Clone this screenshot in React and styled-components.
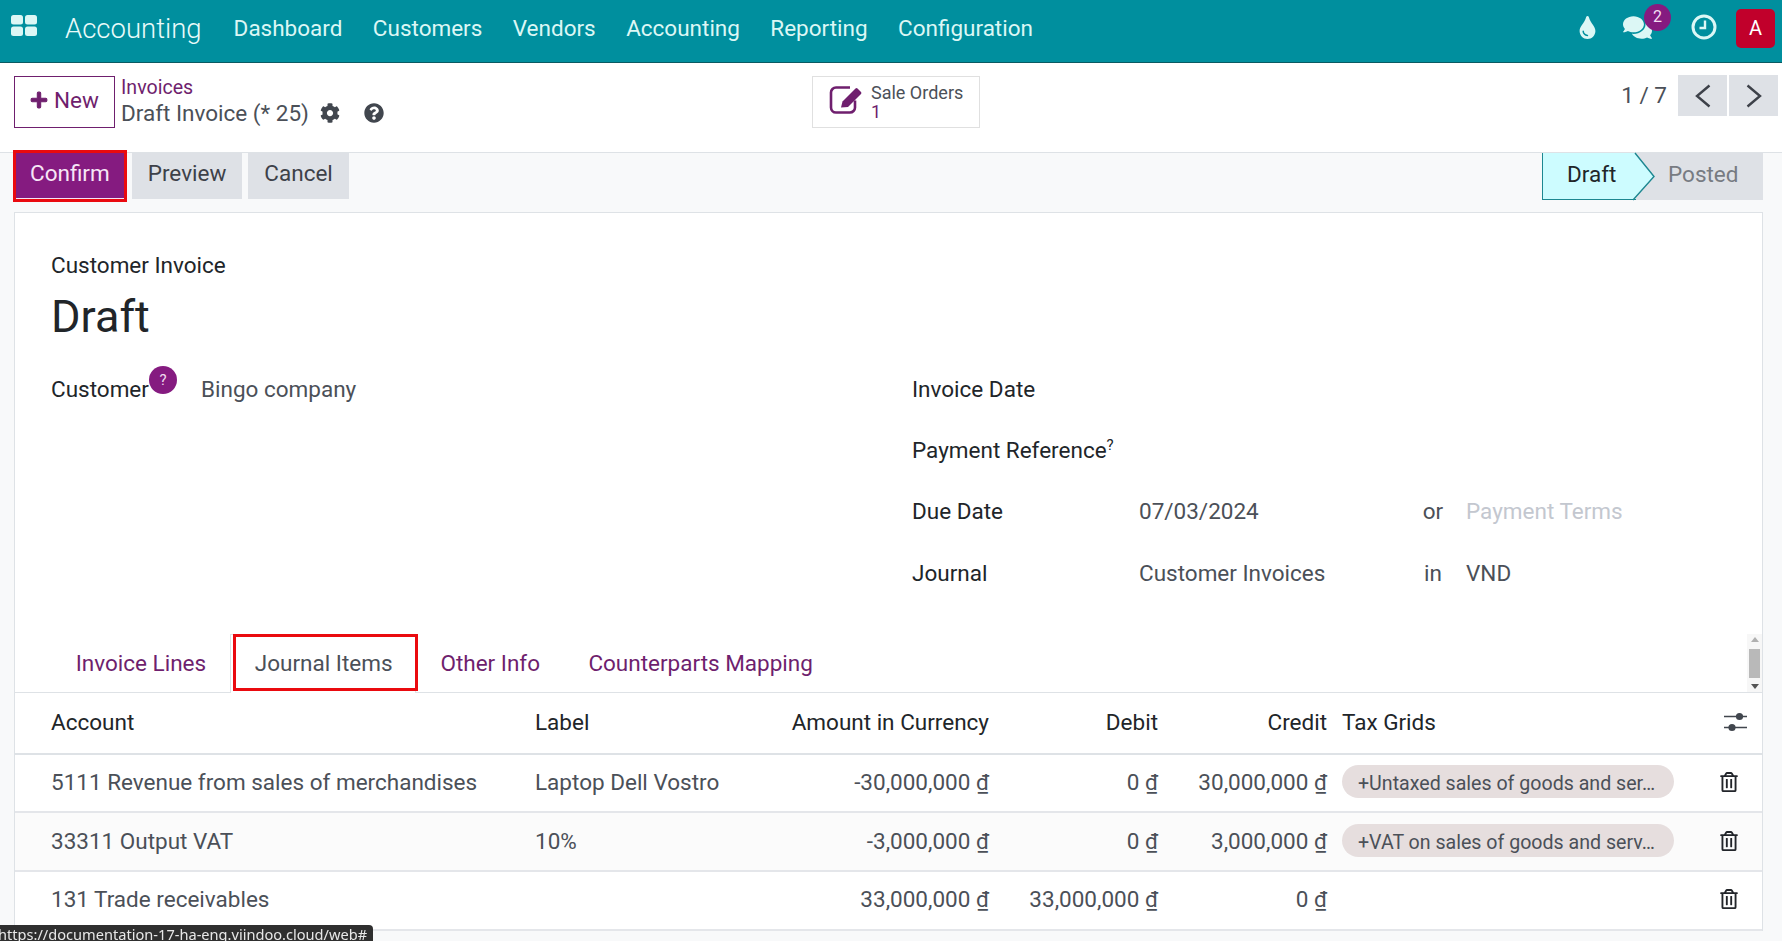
import React from 'react';
import styled, { createGlobalStyle } from 'styled-components';
import { FaPlus, FaCog, FaQuestionCircle, FaTint, FaComments, FaRegTrashAlt } from 'react-icons/fa';

const GlobalStyle = createGlobalStyle`
	html, body {
		margin: 0;
		height: 100%;
		overflow: hidden;
		background: #f8f9fa;
		font-family: Roboto, "Liberation Sans", sans-serif;
		font-size: 22.5px;
		color: #212529;
	}
	* {
		box-sizing: border-box;
	}
`;

const purple = '#851b80';
const link = '#6f1f6e';
const grey = '#4b5058';
const red = '#ea0a0f';

const Navbar = styled.header`
	display: flex;
	align-items: center;
	height: 63px;
	padding: 0 7px 6px 11px;
	background: #008f9e;
	border-bottom: 1px solid #0a5a62;
	color: #dcf7f5;
`;

const AppsIcon = styled.svg`
	width: 26px;
	height: 21px;
	margin-bottom: 5px;
	fill: #dcf7f5;
`;

const Brand = styled.div`
	margin-left: 28px;
	font-size: 27.5px;
	font-weight: 300;
	color: #eafbfa;
`;

const Menu = styled.nav`
	display: flex;
	gap: 30.4px;
	margin-left: 32px;
`;

const Systray = styled.div`
	display: flex;
	align-items: center;
	margin-left: auto;
	padding-top: 1px;
`;

const TrayItem = styled.div`
	position: relative;
	display: flex;
	margin-right: ${(p) => p.$gap}px;
	margin-bottom: 3px;
	font-size: ${(p) => p.$size}px;
`;

const Badge = styled.span`
	position: absolute;
	top: -9px;
	right: -19px;
	width: 27px;
	height: 27px;
	border-radius: 50%;
	background: ${purple};
	color: #f3dff2;
	font-size: 16px;
	line-height: 25px;
	text-align: center;
`;

const Avatar = styled.div`
	width: 39px;
	height: 39px;
	border-radius: 5px;
	background: #c1002b;
	color: #fff;
	font-size: 20px;
	line-height: 39px;
	text-align: center;
`;

const ControlPanel = styled.section`
	display: flex;
	align-items: flex-start;
	height: 90px;
	padding: 13px 4px 0 14px;
	background: #fff;
	border-bottom: 1px solid #dee2e6;
`;

const NewButton = styled.button`
	display: flex;
	align-items: center;
	gap: 6px;
	width: 101px;
	height: 52px;
	padding: 0 0 4px 15px;
	background: #fff;
	border: 1px solid ${link};
	color: ${link};
	font: inherit;
`;

const Breadcrumb = styled.div`
	display: flex;
	flex-direction: column;
	width: 691px;
	margin-left: 6px;
	margin-top: 0;
`;

const Crumb = styled.a`
	height: 21px;
	color: ${link};
	font-size: 19.6px;
	line-height: 24px;
`;

const CurrentRow = styled.div`
	display: flex;
	align-items: center;
	height: 32px;
	color: ${grey};
`;

const RowIcon = styled.span`
	display: flex;
	margin-left: ${(p) => p.$left}px;
	color: #41464e;
	font-size: 20px;
`;

const SmartButton = styled.button`
	display: flex;
	align-items: center;
	gap: 8px;
	width: 168px;
	height: 52px;
	padding: 0 0 0 16px;
	background: #fff;
	border: 1px solid #e0e0e0;
	font: inherit;
	text-align: left;
`;

const SmartIcon = styled.svg`
	width: 34px;
	height: 28px;
	margin-bottom: 5px;
	color: ${link};
`;

const SmartText = styled.div`
	display: flex;
	flex-direction: column;
	font-size: 18px;
	line-height: 19px;
	color: ${grey};

	b {
		font-weight: 400;
		color: ${link};
	}
`;

const Pager = styled.div`
	display: flex;
	align-items: center;
	gap: 2px;
	margin-left: auto;
	margin-top: -1px;
`;

const PagerText = styled.span`
	margin-right: 9px;
	padding-bottom: 2px;
	color: ${grey};
`;

const PagerButton = styled.button`
	display: flex;
	align-items: center;
	justify-content: center;
	width: 49px;
	height: 41px;
	padding: 0;
	border: 0;
	background: #dee1e6;
`;

const Chevron = styled.svg`
	width: 16px;
	height: 24px;
	fill: none;
	stroke: #3d4149;
	stroke-width: 2.4;
`;

const ActionBar = styled.section`
	display: flex;
	align-items: flex-start;
	height: 59px;
	padding-left: 14px;
`;

const ActionButton = styled.button`
	height: 46px;
	margin-right: 6px;
	padding: 0 16px 6px;
	border: 0;
	background: #dee1e6;
	color: #3d4149;
	font: inherit;
`;

const ConfirmButton = styled(ActionButton)`
	margin: 0 8px 0 2px;
	padding: 0 14px 5px;
	background: ${purple};
	color: #f7e6f6;
	border-bottom: 1px solid #f4e5f3;
	outline: 3px solid ${red};
`;

const Statusbar = styled.div`
	display: flex;
	height: 47px;
	margin-left: auto;
	margin-right: 19px;
	background: #dee1e6;
`;

const StatusStep = styled.div`
	position: relative;
	display: flex;
	align-items: center;
	width: ${(p) => p.$width}px;
	padding-left: ${(p) => p.$pad}px;
	padding-bottom: ${(p) => (p.$active ? 4 : 5)}px;
	color: ${(p) => (p.$active ? '#212529' : '#777b82')};
	${(p) => p.$active && 'background: #cdfcff; border: 1px solid #1d8791; border-top: 0; border-right: 0;'}
`;

const StatusArrow = styled.svg`
	position: absolute;
	top: 0;
	right: -19px;
	width: 20px;
	height: 47px;
	overflow: visible;
	fill: #cdfcff;
	stroke: #1d8791;
	stroke-width: 1.4;
`;

const Sheet = styled.main`
	margin: 0 19px 0 14px;
	padding-top: 37px;
	background: #fff;
	border: 1px solid #dee2e6;
	border-bottom: 0;
`;

const SheetHead = styled.div`
	padding-left: 36px;
`;

const DocType = styled.div`
	line-height: 30px;
`;

const Title = styled.h1`
	margin: 0 0 4.5px;
	font-size: 45px;
	font-weight: 400;
	line-height: 73.5px;
`;

const FormGrid = styled.div`
	display: grid;
	grid-template-columns: 861px 227px 283px 44px 1fr;
	grid-auto-rows: 61.4px;
	align-items: center;
	height: 276px;
	padding-left: 36px;
`;

const LeftField = styled.div`
	grid-row: 1;
	display: flex;
	align-items: center;
`;

const FieldLabel = styled.span`
	grid-column: 2;
	white-space: nowrap;
`;

const FieldValue = styled.span`
	color: ${(p) => (p.$muted ? '#c3c7cf' : grey)};
	white-space: nowrap;
`;

const CustomerLabel = styled.span`
	position: relative;
	width: 150px;
`;

const HelpBadge = styled.span`
	position: absolute;
	top: -10px;
	left: 98px;
	width: 28px;
	height: 28px;
	border-radius: 50%;
	background: ${purple};
	color: #f0dcef;
	font-size: 15px;
	line-height: 28px;
	text-align: center;
`;

const Sup = styled.sup`
	font-size: 15px;
	line-height: 0;
`;

const Connector = styled.span`
	grid-column: 4;
	width: 22px;
	color: ${grey};
	text-align: center;
`;

const Tabs = styled.nav`
	display: flex;
	height: 59px;
	padding: 0 0 0 36.5px;
	border-bottom: 1px solid #dee2e6;
`;

const Tab = styled.a`
	display: flex;
	align-items: center;
	height: 58px;
	padding: 0 24.2px;
	color: ${link};
`;

const ActiveTab = styled(Tab)`
	position: relative;
	height: 59px;
	padding: 0 22.7px 2px 23.5px;
	background: #fff;
	border: 1px solid #dee2e6;
	border-bottom: 0;
	color: ${grey};

	&::after {
		content: '';
		position: absolute;
		top: -1px;
		left: 2px;
		right: -3px;
		bottom: 2px;
		border: 3px solid ${red};
	}
`;

const Scrollbar = styled.div`
	display: flex;
	flex-direction: column;
	align-items: center;
	justify-content: space-between;
	width: 15px;
	height: 58px;
	margin-left: auto;
	padding: 3px 0;
	background: #f7f7f7;
`;

const ScrollThumb = styled.div`
	width: 11px;
	height: 29px;
	background: #b9b9b9;
`;

const ScrollArrow = styled.div`
	width: 0;
	height: 0;
	border-left: 4px solid transparent;
	border-right: 4px solid transparent;
	${(p) => (p.$up ? 'border-bottom: 5px solid #b0b0b0;' : 'border-top: 5px solid #555;')}
`;

const Table = styled.table`
	width: 100%;
	table-layout: fixed;
	border-collapse: collapse;
`;

const HeadCell = styled.th`
	height: 60.5px;
	padding: 0 7px 1px;
	padding-left: ${(p) => (p.$first ? 36 : p.$tax ? 8 : p.$right ? 0 : 7)}px;
	border-bottom: 2px solid #dee2e6;
	font-weight: 400;
	text-align: ${(p) => (p.$right ? 'right' : 'left')};
	white-space: nowrap;
`;

const Row = styled.tr`
	background: ${(p) => (p.$odd ? '#fbfbfb' : '#fff')};
`;

const Cell = styled.td`
	height: 58.7px;
	padding: 0 7px 2px;
	padding-left: ${(p) => (p.$first ? 36 : p.$tax ? 8 : 7)}px;
	border-bottom: 2px solid #e4e6ea;
	color: ${grey};
	text-align: ${(p) => (p.$right ? 'right' : 'left')};
	white-space: nowrap;
`;

const Currency = styled.span`
	text-decoration: underline;
`;

const Pill = styled.span`
	display: block;
	width: 332px;
	height: 33px;
	padding-left: 16px;
	border-radius: 17px;
	background: #e6dede;
	font-size: 19.6px;
	line-height: 37px;
	white-space: nowrap;
`;

const IconCell = styled.span`
	display: flex;
	justify-content: flex-end;
	padding-right: ${(p) => p.$pad}px;
	color: #22252a;
	font-size: 20px;
`;

const SliderIcon = styled.svg`
	width: 23px;
	height: 20px;
	fill: #41464e;
	stroke: #41464e;
`;

const LinkStatus = styled.div`
	position: fixed;
	left: -8px;
	bottom: 0;
	height: 16px;
	padding: 0 6px;
	border-radius: 0 4px 0 0;
	background: #2f2f2f;
	color: #e8e8e8;
	font-family: "Noto Sans", sans-serif;
	font-size: 14.6px;
	line-height: 18px;
	white-space: nowrap;
`;

const lines = [
	{ account: '5111 Revenue from sales of merchandises', label: 'Laptop Dell Vostro', amount: '-30,000,000', debit: '0', credit: '30,000,000', tax: '+Untaxed sales of goods and ser…' },
	{ account: '33311 Output VAT', label: '10%', amount: '-3,000,000', debit: '0', credit: '3,000,000', tax: '+VAT on sales of goods and serv…' },
	{ account: '131 Trade receivables', label: '', amount: '33,000,000', debit: '33,000,000', credit: '0', tax: '' },
];

const Money = ({ value }) => (
	<>
		{value} <Currency>₫</Currency>
	</>
);

export default function App() {
	return (
		<>
			<GlobalStyle />
			<Navbar>
				<AppsIcon viewBox="0 0 26 21">
					<rect x="0" y="0" width="12" height="9.5" rx="2.5" />
					<rect x="14" y="0" width="12" height="9.5" rx="2.5" />
					<rect x="0" y="11.5" width="12" height="9.5" rx="2.5" />
					<rect x="14" y="11.5" width="12" height="9.5" rx="2.5" />
				</AppsIcon>
				<Brand>Accounting</Brand>
				<Menu>
					<span>Dashboard</span>
					<span>Customers</span>
					<span>Vendors</span>
					<span>Accounting</span>
					<span>Reporting</span>
					<span>Configuration</span>
				</Menu>
				<Systray>
					<TrayItem $gap={24} $size={23}>
						<FaTint />
					</TrayItem>
					<TrayItem $gap={39} $size={29}>
						<FaComments />
						<Badge>2</Badge>
					</TrayItem>
					<TrayItem $gap={19} $size={26}>
						<svg width="26" height="26" viewBox="0 0 26 26" fill="none" stroke="currentColor">
							<circle cx="13" cy="13" r="11" strokeWidth="3" />
							<path d="M14 6.5v7.5H8.5" strokeWidth="2.4" />
						</svg>
					</TrayItem>
					<Avatar>A</Avatar>
				</Systray>
			</Navbar>
			<ControlPanel>
				<NewButton>
					<FaPlus size={18} stroke="currentColor" strokeWidth={30} />
					New
				</NewButton>
				<Breadcrumb>
					<Crumb>Invoices</Crumb>
					<CurrentRow>
						Draft Invoice (* 25)
						<RowIcon $left={11}>
							<FaCog />
						</RowIcon>
						<RowIcon $left={24}>
							<FaQuestionCircle />
						</RowIcon>
					</CurrentRow>
				</Breadcrumb>
				<SmartButton>
					<SmartIcon viewBox="0 0 34 28">
						<path
							d="M21 1.5H7a5 5 0 0 0-5 5v15a5 5 0 0 0 5 5h14a5 5 0 0 0 5-5v-7"
							fill="none"
							stroke="currentColor"
							strokeWidth="2.6"
						/>
						<path
							d="M12 21.5l1.5-6 13-13a1.5 1.5 0 0 1 2 0l3.5 3.5a1.5 1.5 0 0 1 0 2l-13 13z"
							fill="currentColor"
						/>
					</SmartIcon>
					<SmartText>
						Sale Orders
						<b>1</b>
					</SmartText>
				</SmartButton>
				<Pager>
					<PagerText>1 / 7</PagerText>
					<PagerButton>
						<Chevron viewBox="0 0 16 24">
							<path d="M14.5 1.5L2 12l12.5 10.5" />
						</Chevron>
					</PagerButton>
					<PagerButton>
						<Chevron viewBox="0 0 16 24">
							<path d="M1.5 1.5L14 12 1.5 22.5" />
						</Chevron>
					</PagerButton>
				</Pager>
			</ControlPanel>
			<ActionBar>
				<ConfirmButton>Confirm</ConfirmButton>
				<ActionButton>Preview</ActionButton>
				<ActionButton>Cancel</ActionButton>
				<Statusbar>
					<StatusStep $active $width={94} $pad={24}>
						Draft
						<StatusArrow viewBox="0 0 20 47">
							<path d="M0 0l19 23.5L-2 47" />
						</StatusArrow>
					</StatusStep>
					<StatusStep $width={127} $pad={32}>
						Posted
					</StatusStep>
				</Statusbar>
			</ActionBar>
			<Sheet>
				<SheetHead>
					<DocType>Customer Invoice</DocType>
					<Title>Draft</Title>
				</SheetHead>
				<FormGrid>
					<LeftField>
						<CustomerLabel>
							Customer
							<HelpBadge>?</HelpBadge>
						</CustomerLabel>
						<FieldValue>Bingo company</FieldValue>
					</LeftField>
					<FieldLabel>Invoice Date</FieldLabel>
					<FieldLabel>
						Payment Reference<Sup>?</Sup>
					</FieldLabel>
					<FieldLabel>Due Date</FieldLabel>
					<FieldValue>07/03/2024</FieldValue>
					<Connector>or</Connector>
					<FieldValue $muted>Payment Terms</FieldValue>
					<FieldLabel>Journal</FieldLabel>
					<FieldValue>Customer Invoices</FieldValue>
					<Connector>in</Connector>
					<FieldValue>VND</FieldValue>
				</FormGrid>
				<Tabs>
					<Tab>Invoice Lines</Tab>
					<ActiveTab>Journal Items</ActiveTab>
					<Tab>Other Info</Tab>
					<Tab>Counterparts Mapping</Tab>
					<Scrollbar>
						<ScrollArrow $up />
						<ScrollThumb />
						<ScrollArrow />
					</Scrollbar>
				</Tabs>
				<Table>
					<colgroup>
						<col width="513" />
						<col width="262" />
						<col width="206" />
						<col width="169" />
						<col width="169" />
						<col width="356" />
						<col width="72" />
					</colgroup>
					<thead>
						<tr>
							<HeadCell $first>Account</HeadCell>
							<HeadCell>Label</HeadCell>
							<HeadCell $right>Amount in Currency</HeadCell>
							<HeadCell $right>Debit</HeadCell>
							<HeadCell $right>Credit</HeadCell>
							<HeadCell $tax>Tax Grids</HeadCell>
							<HeadCell>
								<IconCell $pad={8}>
									<SliderIcon viewBox="0 0 23 20">
										<path d="M0 4.5h23M0 15.5h23" strokeWidth="1.5" />
										<circle cx="15.5" cy="4.5" r="3.6" stroke="none" />
										<circle cx="8" cy="15.5" r="3.6" stroke="none" />
									</SliderIcon>
								</IconCell>
							</HeadCell>
						</tr>
					</thead>
					<tbody>
						{lines.map((line, i) => (
							<Row key={line.account} $odd={i === 1}>
								<Cell $first>{line.account}</Cell>
								<Cell>{line.label}</Cell>
								<Cell $right>
									<Money value={line.amount} />
								</Cell>
								<Cell $right>
									<Money value={line.debit} />
								</Cell>
								<Cell $right>
									<Money value={line.credit} />
								</Cell>
								<Cell $tax>{line.tax && <Pill>{line.tax}</Pill>}</Cell>
								<Cell>
									<IconCell $pad={16}>
										<FaRegTrashAlt />
									</IconCell>
								</Cell>
							</Row>
						))}
					</tbody>
				</Table>
			</Sheet>
			<LinkStatus>https://documentation-17-ha-eng.viindoo.cloud/web#</LinkStatus>
		</>
	);
}
